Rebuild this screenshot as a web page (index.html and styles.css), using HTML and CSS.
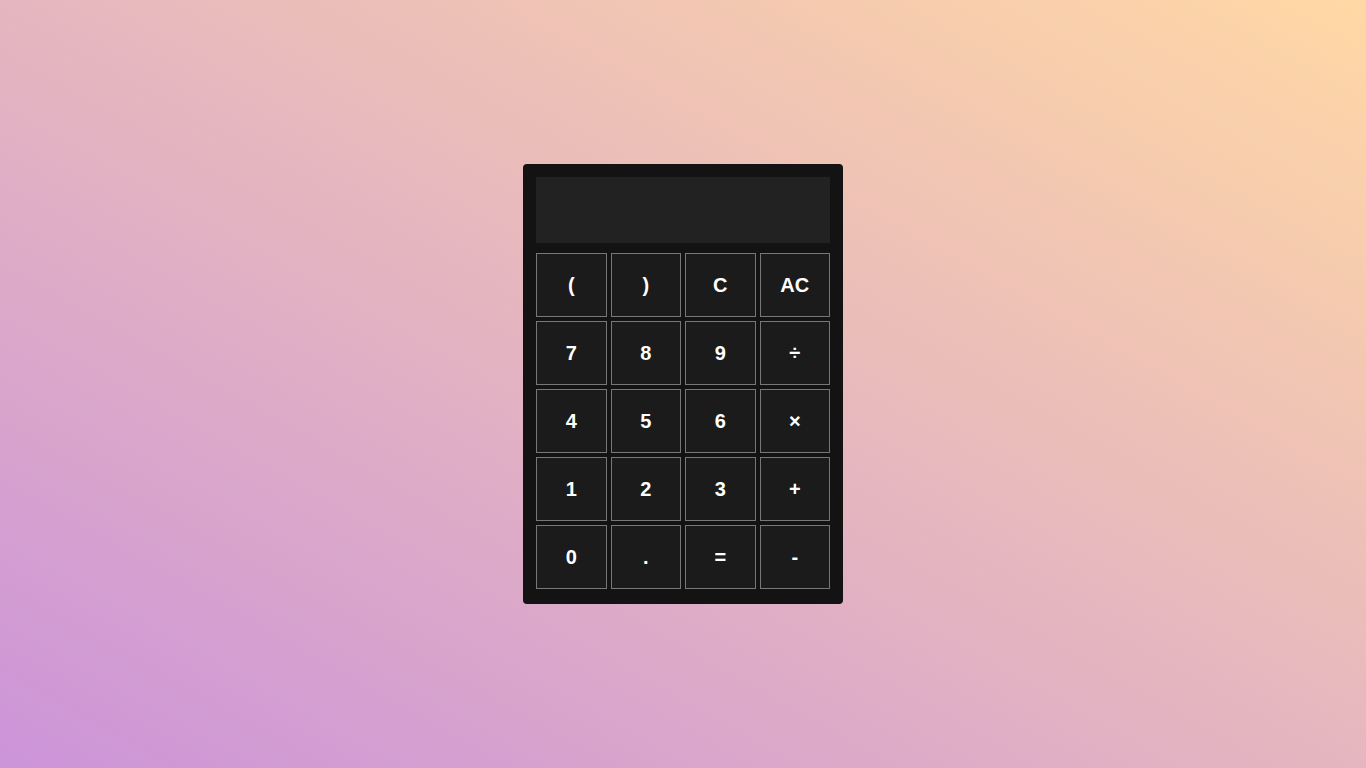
FILE: index.html
```html
<!DOCTYPE html>
<html lang="en">
<head>
<meta charset="utf-8">
<title>Calculator</title>
<link rel="stylesheet" href="styles.css">
</head>
<body>
<div class="calculator">
  <div class="display"></div>
  <div class="keys">
    <button class="key">(</button>
    <button class="key">)</button>
    <button class="key">C</button>
    <button class="key">AC</button>
    <button class="key">7</button>
    <button class="key">8</button>
    <button class="key">9</button>
    <button class="key">÷</button>
    <button class="key">4</button>
    <button class="key">5</button>
    <button class="key">6</button>
    <button class="key">×</button>
    <button class="key">1</button>
    <button class="key">2</button>
    <button class="key">3</button>
    <button class="key">+</button>
    <button class="key">0</button>
    <button class="key">.</button>
    <button class="key">=</button>
    <button class="key">-</button>
  </div>
</div>
</body>
</html>
```
FILE: styles.css
```css
html, body {
  margin: 0;
  height: 100%;
}
body {
  background: linear-gradient(to top right, #cc94d9, #ffd8a5);
  display: flex;
  align-items: center;
  justify-content: center;
  font-family: "Liberation Sans", Arial, sans-serif;
}
.calculator {
  width: 320px;
  height: 440px;
  box-sizing: border-box;
  background: #131313;
  border-radius: 4px;
  padding: 13px 13px 15px;
  display: flex;
  flex-direction: column;
}
.display {
  height: 66px;
  background: #222222;
  margin-bottom: 10px;
}
.keys {
  display: grid;
  grid-template-columns: repeat(4, 1fr);
  grid-auto-rows: 64px;
  gap: 4px;
}
.key {
  background: #1b1b1b;
  border: 1px solid #777777;
  color: #ffffff;
  font-family: "Liberation Sans", Arial, sans-serif;
  font-weight: bold;
  font-size: 20px;
  padding: 0;
  margin: 0;
  cursor: pointer;
}
```
